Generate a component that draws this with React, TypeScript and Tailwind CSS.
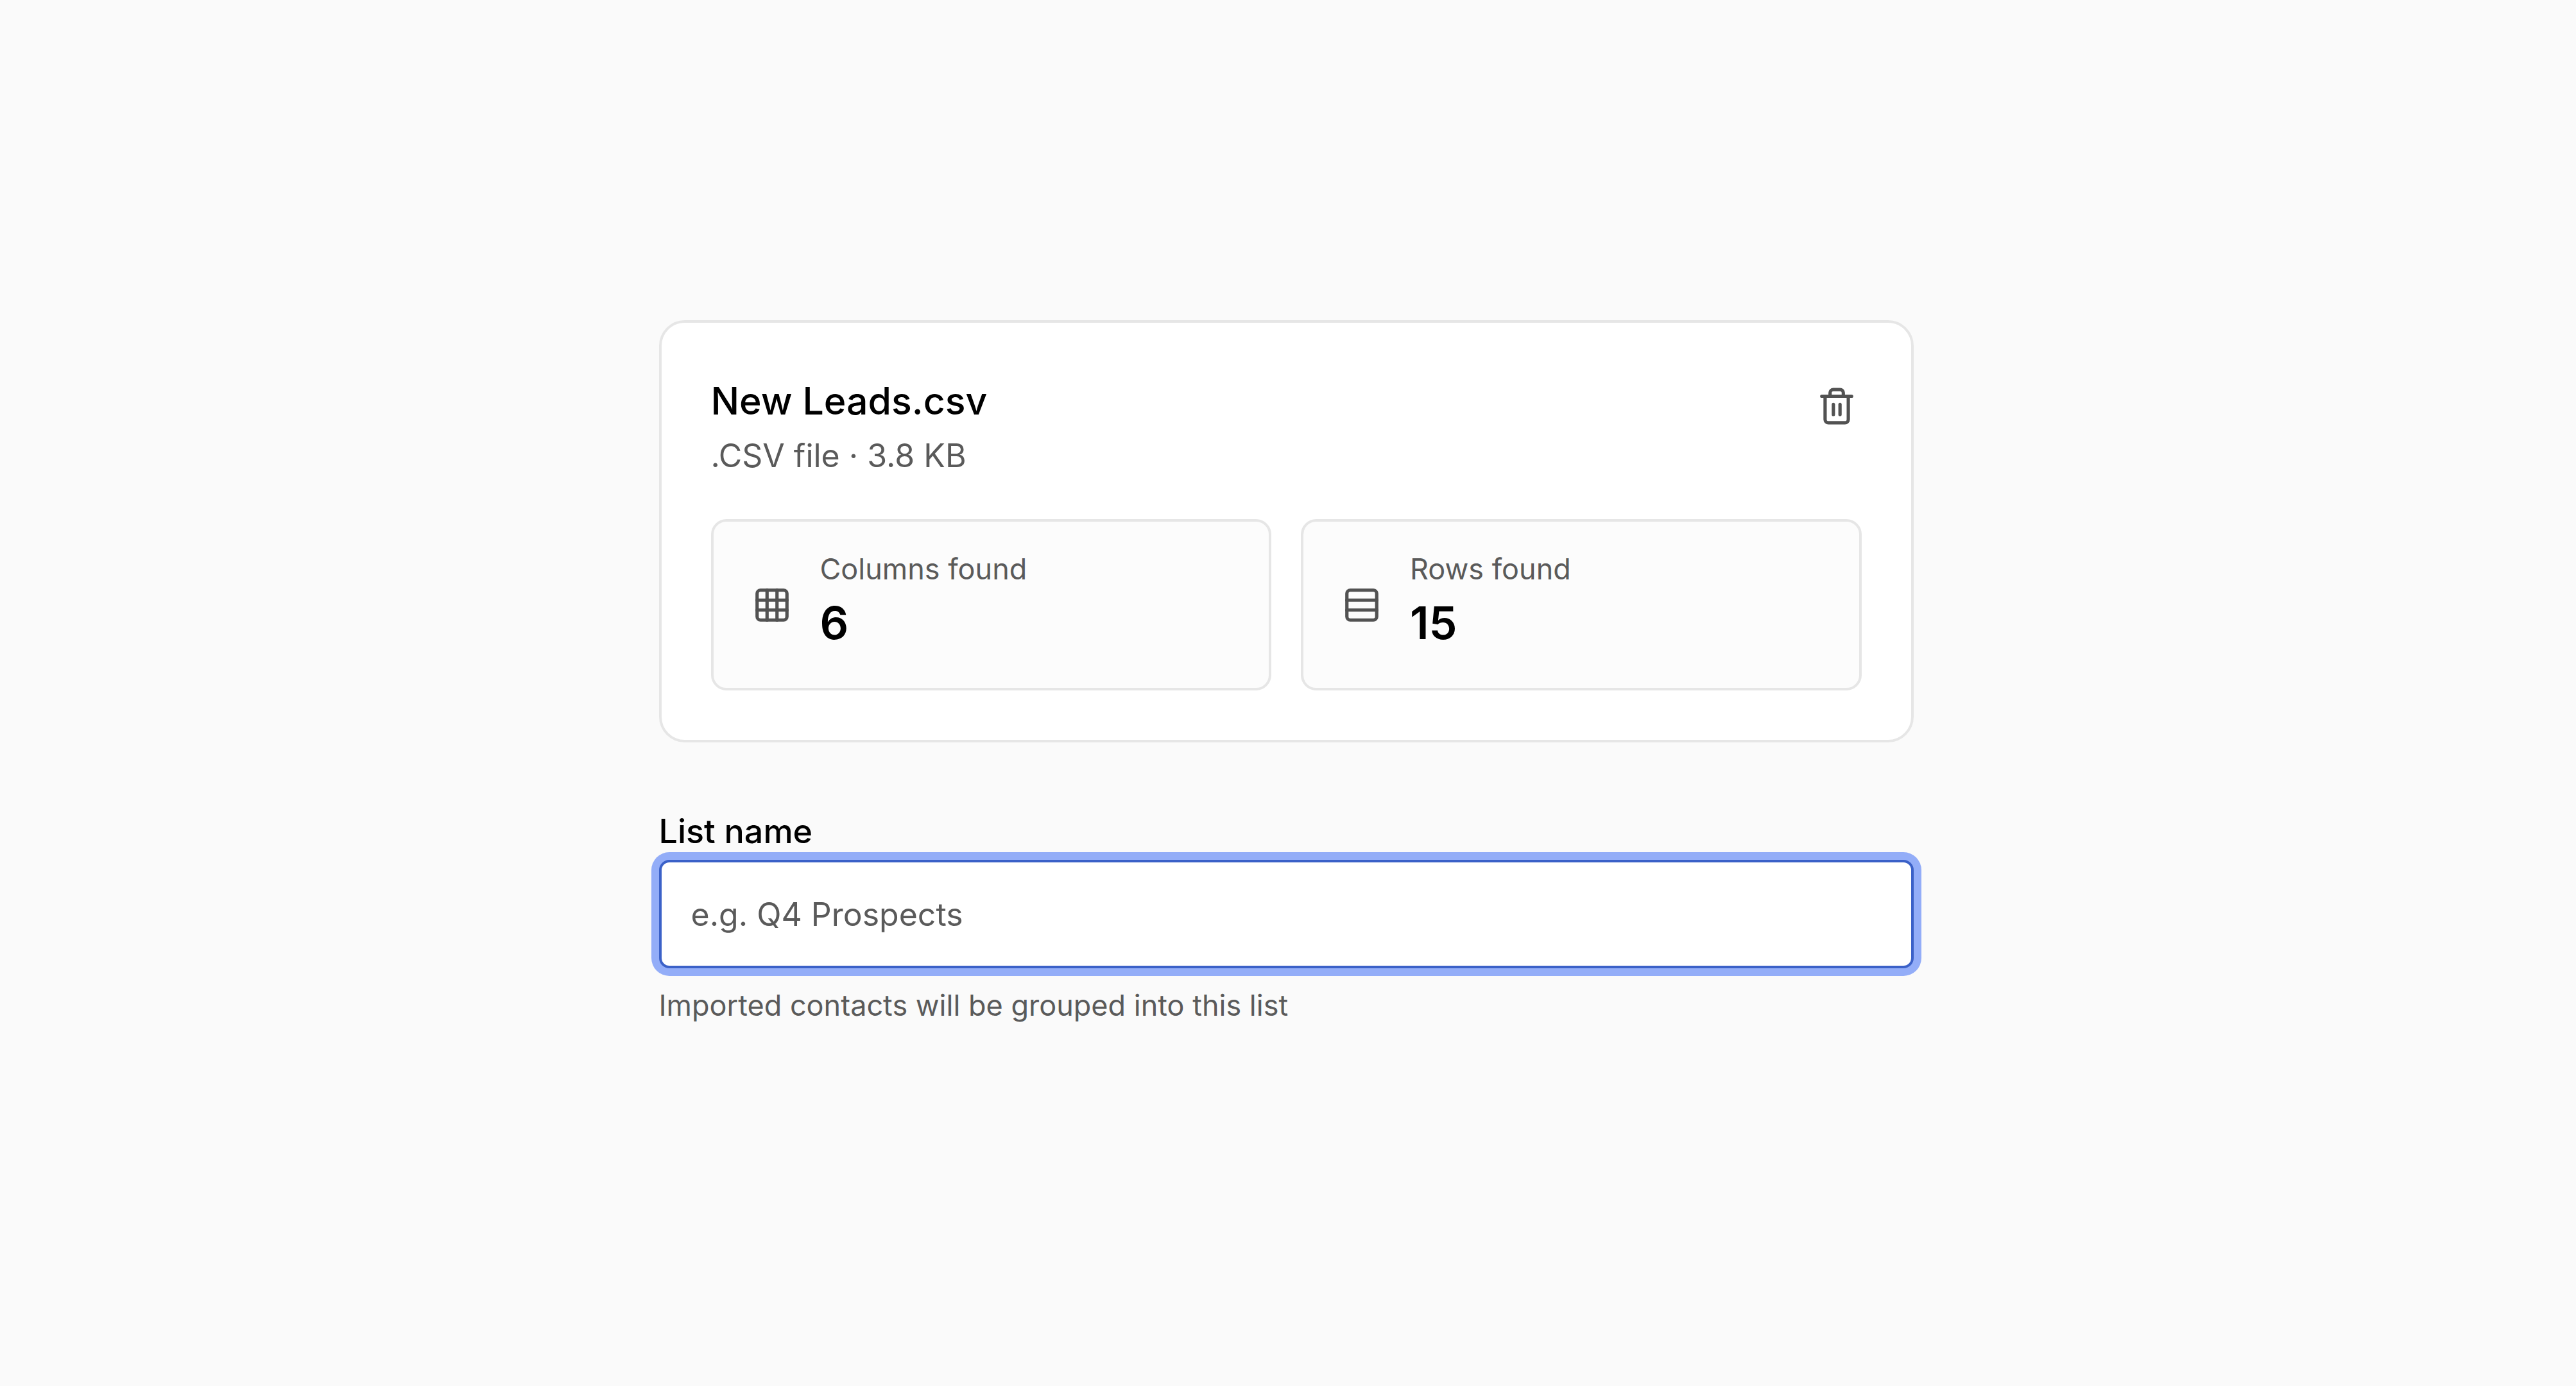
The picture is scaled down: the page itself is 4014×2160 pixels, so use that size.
import { Grid3x3, Rows3, Trash2, type LucideIcon } from "lucide-react";

function Stat({ icon: Icon, label, value }: { icon: LucideIcon; label: string; value: number }) {
  return (
    <div className="flex flex-1 items-center gap-11 rounded-3xl border-4 border-[#e6e6e6] bg-[#fcfcfc] px-15 py-11">
      <Icon className="size-[62px] shrink-0 text-[#525252]" aria-hidden="true" />
      <dl className="pb-[3px]">
        <dt className="text-[45px] leading-[60px] text-[#5a5a5a]">{label}</dt>
        <dd className="text-[70px] leading-[108px] font-semibold text-black">{value}</dd>
      </dl>
    </div>
  );
}

export default function App() {
  return (
    <main className="min-h-screen bg-[#fafafa] pt-[499px] pr-1.5 font-['Inter',sans-serif]">
      <div className="mx-auto flex max-w-[1955px] flex-col">
        <section className="rounded-[40px] border-4 border-[#e6e6e6] bg-white p-[77px]">
          <header className="flex items-start justify-between">
            <div>
              <h1 className="text-[59px] leading-[90px] font-medium text-black">New Leads.csv</h1>
              <p className="text-[50px] leading-20 text-[#5a5a5a]">.CSV file · 3.8 KB</p>
            </div>
            <button type="button" aria-label="Remove file" className="mt-3.5 p-2 text-[#525252]">
              <Trash2 className="size-[62px]" aria-hidden="true" />
            </button>
          </header>
          <div className="mt-[59px] flex gap-[46px]">
            <Stat icon={Grid3x3} label="Columns found" value={6} />
            <Stat icon={Rows3} label="Rows found" value={15} />
          </div>
        </section>

        <label htmlFor="list-name" className="mt-[99px] text-[52px] leading-20 font-medium text-black">
          List name
        </label>
        <input
          id="list-name"
          type="text"
          placeholder="e.g. Q4 Prospects"
          aria-describedby="list-name-hint"
          className="mt-1 h-[169px] w-full rounded-2xl border-4 border-[#3b61c8] bg-white px-[46px] text-[50px] text-black ring-12 ring-[#93adf8] outline-none placeholder:text-[#5a5a5a]"
        />
        <p id="list-name-hint" className="mt-[26px] text-[45px] leading-16 text-[#5a5a5a]">
          Imported contacts will be grouped into this list
        </p>
      </div>
    </main>
  );
}
